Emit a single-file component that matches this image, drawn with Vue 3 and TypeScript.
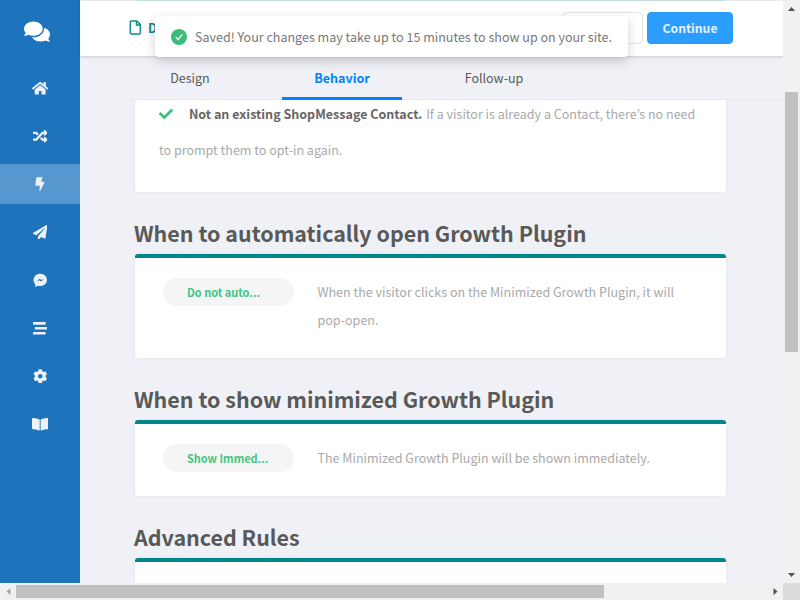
<script setup lang="ts">
interface Icon {
  name: string
  box: string
  path: string
  active?: boolean
}

interface Rule {
  title: string
  choice: string
  text: string
  kind: string
}

const nav: Icon[] = [
  { name: 'home', box: '0 0 576 512', path: 'M280.37 148.26L96 300.11V464a16 16 0 0 0 16 16l112.06-.29a16 16 0 0 0 15.92-16V368a16 16 0 0 1 16-16h64a16 16 0 0 1 16 16v95.64a16 16 0 0 0 16 16.05L464 480a16 16 0 0 0 16-16V300L295.67 148.26a12.19 12.19 0 0 0-15.3 0zM571.6 251.47L488 182.56V44.05a12 12 0 0 0-12-12h-56a12 12 0 0 0-12 12v72.61L318.47 43a48 48 0 0 0-61 0L4.34 251.47a12 12 0 0 0-1.6 16.9l25.5 31A12 12 0 0 0 45.15 301l235.22-193.74a12.19 12.19 0 0 1 15.3 0L530.9 301a12 12 0 0 0 16.9-1.6l25.5-31a12 12 0 0 0-1.7-16.93z' },
  { name: 'random', box: '0 0 512 512', path: 'M504.971 359.029c9.373 9.373 9.373 24.569 0 33.941l-80 79.984c-15.01 15.01-40.971 4.49-40.971-16.971V416h-58.785a12.004 12.004 0 0 1-8.773-3.812l-70.556-75.596 53.333-57.143L352 336h32v-39.981c0-21.438 25.943-31.998 40.971-16.971l80 79.981zM12 176h84l52.781 56.551 53.333-57.143-70.556-75.596A11.999 11.999 0 0 0 122.785 96H12c-6.627 0-12 5.373-12 12v56c0 6.627 5.373 12 12 12zm372 0v39.984c0 21.46 25.961 31.98 40.971 16.971l80-79.984c9.373-9.373 9.373-24.569 0-33.941l-80-79.981C409.943 24.021 384 34.582 384 56.019V96h-58.785a12.004 12.004 0 0 0-8.773 3.812L96 336H12c-6.627 0-12 5.373-12 12v56c0 6.627 5.373 12 12 12h110.785c3.326 0 6.503-1.381 8.773-3.812L352 176h32z' },
  { name: 'bolt', box: '0 0 30 45', active: true, path: 'M6 1h16c1 0 1.500.7 1.200 1.500L19 15h9.500c1 0 1.500 1 1 2L16 43.500c-.8 1.200-2.600.6-2.400-.8L15 27H2.500c-1 0-1.700-.8-1.500-1.800L4 2.500C4.200 1.500 5 1 6 1z' },
  { name: 'plane', box: '0 0 512 512', path: 'M476 3.2L12.5 270.6c-18.1 10.4-15.8 35.6 2.2 43.2L121 358.4l287.3-253.2c5.5-4.9 13.3 2.6 8.6 8.3L176 407v80.5c0 23.6 28.5 32.9 42.5 15.8L282 426l124.6 52.2c14.2 6 30.4-2.9 33-18.2l72-432C515 7.8 493.3-6.8 476 3.2z' },
  { name: 'messenger', box: '0 0 512 512', path: 'M256 24C125 24 20 121 20 244c0 60 22 112 62 150v98l92-46c26 8 54 12 82 12 131 0 236-93 236-214S387 24 256 24zM128 306l102-104 66 44 96-46-104 104-64-44-96 46z' },
  { name: 'stream', box: '0 0 512 512', path: 'M16 128h416c8.84 0 16-7.16 16-16V48c0-8.84-7.16-16-16-16H16C7.16 32 0 39.16 0 48v64c0 8.84 7.16 16 16 16zm480 80H80c-8.84 0-16 7.16-16 16v64c0 8.84 7.16 16 16 16h416c8.84 0 16-7.16 16-16v-64c0-8.84-7.16-16-16-16zm-64 176H16c-8.84 0-16 7.16-16 16v64c0 8.84 7.16 16 16 16h416c8.84 0 16-7.16 16-16v-64c0-8.84-7.16-16-16-16z' },
  { name: 'cog', box: '0 0 512 512', path: 'M487.4 315.7l-42.6-24.6c4.3-23.2 4.3-47 0-70.2l42.6-24.6c4.9-2.8 7.1-8.6 5.5-14-11.1-35.6-30-67.8-54.7-94.6-3.8-4.1-10-5.1-14.8-2.3L380.8 110c-17.9-15.4-38.5-27.3-60.8-35.1V25.8c0-5.6-3.9-10.5-9.4-11.7-36.7-8.2-74.3-7.8-109.2 0-5.5 1.2-9.4 6.1-9.4 11.7V75c-22.2 7.9-42.8 19.8-60.8 35.1L88.7 85.5c-4.9-2.8-11-1.9-14.8 2.3-24.7 26.7-43.6 58.9-54.7 94.6-1.7 5.4.6 11.2 5.5 14L67.3 221c-4.3 23.2-4.3 47 0 70.2l-42.6 24.6c-4.9 2.8-7.1 8.6-5.5 14 11.1 35.6 30 67.8 54.7 94.6 3.8 4.1 10 5.1 14.8 2.3l42.6-24.6c17.9 15.4 38.5 27.3 60.8 35.1v49.2c0 5.6 3.9 10.5 9.4 11.7 36.7 8.2 74.3 7.8 109.2 0 5.5-1.2 9.4-6.1 9.4-11.7v-49.2c22.2-7.9 42.8-19.8 60.8-35.1l42.6 24.6c4.9 2.8 11 1.9 14.8-2.3 24.7-26.7 43.6-58.9 54.7-94.6 1.5-5.5-.7-11.3-5.6-14.1zM256 336c-44.1 0-80-35.9-80-80s35.9-80 80-80 80 35.9 80 80-35.9 80-80 80z' },
  { name: 'book', box: '0 0 576 512', path: 'M542.22 32.05c-54.8 3.11-163.72 14.43-230.96 55.59-4.64 2.84-7.27 7.89-7.27 13.17v363.87c0 11.55 12.63 18.85 23.28 13.49 69.18-34.82 169.23-44.32 218.7-46.92 16.89-.89 30.02-14.43 30.02-30.66V62.75c.01-17.71-15.35-31.74-33.77-30.7zM264.73 87.64C197.5 46.48 88.58 35.17 33.78 32.05 15.36 31.01 0 45.04 0 62.75V400.6c0 16.24 13.13 29.78 30.02 30.66 49.49 2.6 149.59 12.11 218.77 46.95 10.62 5.35 23.21-1.94 23.21-13.46V100.63c0-5.29-2.62-10.14-7.27-12.99z' },
]

const rules: Rule[] = [
  {
    title: 'When to automatically open Growth Plugin',
    choice: 'Do not auto...',
    text: 'When the visitor clicks on the Minimized Growth Plugin, it will pop-open.',
    kind: 'open',
  },
  {
    title: 'When to show minimized Growth Plugin',
    choice: 'Show Immed...',
    text: 'The Minimized Growth Plugin will be shown immediately.',
    kind: 'show',
  },
]
</script>

<template>
  <div class="window">
    <div class="page">
      <aside class="sidebar">
        <div class="logo">
          <svg viewBox="0 0 576 512"><path d="M416 192c0-88.4-93.1-160-208-160S0 103.6 0 192c0 34.3 14.1 65.9 38 92-13.4 30.2-35.5 54.2-35.8 54.5-2.2 2.3-2.8 5.7-1.5 8.7S4.8 352 8 352c36.6 0 66.9-12.3 88.7-25 32.2 15.7 70.3 25 111.3 25 114.9 0 208-71.6 208-160zm122 220c23.9-26 38-57.7 38-92 0-66.9-53.5-124.2-129.3-148.1.9 6.6 1.3 13.3 1.3 20.1 0 105.9-107.7 192-240 192-10.8 0-21.3-.8-31.7-1.9C207.8 439.6 281.8 480 368 480c41 0 79.1-9.2 111.3-25 21.8 12.7 52.1 25 88.7 25 3.2 0 6.1-1.9 7.3-4.8 1.3-2.9.7-6.3-1.5-8.7-.3-.3-22.4-24.2-35.8-54.5z" /></svg>
        </div>
        <nav>
          <a v-for="item in nav" :key="item.name" :class="{ active: item.active }">
            <svg :viewBox="item.box"><path :d="item.path" /></svg>
          </a>
        </nav>
      </aside>

      <main>
        <div class="top-line"><span></span></div>
        <header>
          <div class="name">
            <svg viewBox="0 0 12 15">
              <path d="M2 1h5.6L11 4.4V13a1 1 0 0 1-1 1H2a1 1 0 0 1-1-1V2a1 1 0 0 1 1-1z" />
              <path d="M7.2 1v4H11" />
            </svg>
            <span>D</span>
          </div>
          <div class="actions">
            <button class="plain"></button>
            <button class="primary">Continue</button>
          </div>
        </header>

        <div class="tabs">
          <div class="tab">Design</div>
          <div class="tab selected">Behavior</div>
          <div class="tab">Follow-up</div>
        </div>

        <div class="content">
          <section class="card intro">
            <p>
              <svg viewBox="0 0 512 512"><path d="M173.898 439.404l-166.4-166.4c-9.997-9.997-9.997-26.206 0-36.204l36.203-36.204c9.997-9.998 26.207-9.998 36.204 0L192 312.69 432.095 72.596c9.997-9.997 26.207-9.997 36.204 0l36.203 36.204c9.997 9.997 9.997 26.206 0 36.204l-294.4 294.401c-9.998 9.997-26.207 9.997-36.204-.001z" /></svg><b>Not an existing ShopMessage Contact.</b> If a visitor is already a Contact, there’s no need to prompt them to opt-in again.
            </p>
          </section>

          <template v-for="rule in rules" :key="rule.kind">
            <h2>{{ rule.title }}</h2>
            <section class="card ruled" :class="rule.kind">
              <div class="pill">{{ rule.choice }}</div>
              <p>{{ rule.text }}</p>
            </section>
          </template>

          <h2>Advanced Rules</h2>
          <section class="card ruled last"></section>
        </div>
      </main>
    </div>

    <div class="vbar">
      <svg viewBox="0 0 17 17"><path d="M5 11h7L8.500 7z" /></svg>
      <div class="thumb"></div>
      <svg viewBox="0 0 17 17"><path d="M5 7h7L8.500 11z" /></svg>
    </div>
    <div class="hbar">
      <svg class="off" viewBox="0 0 17 17"><path d="M10.500 5v7L6.500 8.500z" /></svg>
      <div class="thumb"></div>
      <svg viewBox="0 0 17 17"><path d="M7.500 5v7L11.500 8.500z" /></svg>
    </div>
    <div class="corner"></div>

    <div class="toast">
      <svg viewBox="0 0 16 16"><circle cx="8" cy="8" r="8" /><path d="M4.800 8.200L7.200 10.600 11.300 5.300" /></svg>
      <span>Saved! Your changes may take up to 15 minutes to show up on your site.</span>
    </div>
  </div>
</template>

<style>
body {
  margin: 0;
  overflow: hidden;
}
</style>

<style scoped>
.window {
  position: relative;
  display: grid;
  grid-template: 583px 17px / 783px 17px;
  width: 800px;
  height: 600px;
  overflow: hidden;
  font-family: "Noto Sans CJK KR", "Noto Sans", sans-serif;
  font-size: 12.52px;
  color: #595959;
}

.page {
  display: flex;
  overflow: hidden;
  background: #eff1f6;
}

.sidebar {
  width: 80px;
  flex: none;
  background: #1d73bc;
}

.logo {
  box-sizing: border-box;
  display: flex;
  height: 68px;
  padding: 20px 0 0 24px;
}

.logo svg {
  width: 26px;
  height: 23px;
  fill: #fff;
}

nav {
  display: flex;
  flex-direction: column;
  gap: 8px;
}

nav a {
  display: flex;
  align-items: center;
  justify-content: center;
  height: 40px;
}

nav a.active {
  background: #5597ce;
}

nav svg {
  height: 14.5px;
  fill: #eff1f6;
}

main {
  flex: 1;
  min-width: 0;
  display: flex;
  flex-direction: column;
}

.top-line {
  height: 1px;
  flex: none;
  padding: 0 58px 0 55px;
}

.top-line span {
  display: block;
  height: 1px;
  background: #c9e4e7;
}

header {
  flex: none;
  box-sizing: border-box;
  height: 55px;
  display: flex;
  justify-content: space-between;
  padding: 11px 50px 0 49px;
  background: #fff;
  box-shadow: 0 1px 3px rgba(0, 0, 0, 0.16);
}

.name {
  display: flex;
  align-items: center;
  gap: 6.5px;
  height: 31px;
  color: #0a8a90;
  font-weight: 700;
}

.name svg {
  width: 12.5px;
  height: 15px;
  fill: none;
  stroke: #0a8a90;
  stroke-width: 1.4;
}

.actions {
  display: flex;
  gap: 4px;
}

button {
  box-sizing: border-box;
  height: 32px;
  padding: 0;
  border: 1px solid #e2e2e2;
  border-radius: 4px;
  background: #fff;
  font: inherit;
}

.plain {
  width: 81px;
}

.primary {
  width: 86px;
  padding-bottom: 1px;
  border-color: #2a9dff;
  background: #2a9dff;
  color: #e4f2ff;
  font-size: 12.2px;
  font-weight: 700;
}

.tabs {
  flex: none;
  box-sizing: border-box;
  height: 44px;
  margin-left: 50px;
  display: flex;
  gap: 32px;
  border-bottom: 1px solid #e6e7ea;
}

.tab {
  box-sizing: border-box;
  width: 120px;
  height: 44px;
  line-height: 43px;
  text-align: center;
}

.tab.selected {
  border-bottom: 3px solid #0084ff;
  color: #0084ff;
  font-weight: 700;
}

.content {
  padding: 0 57px 0 55px;
}

.card {
  box-sizing: border-box;
  border-radius: 3px;
  background: #fff;
  box-shadow: 0 0 3px rgba(0, 0, 0, 0.08);
}

.intro {
  display: flow-root;
  height: 92px;
  padding: 0 24px;
  border-radius: 0 0 3px 3px;
  clip-path: inset(0 -4px -4px -4px);
}

.card p {
  margin: 0;
  color: #a9a9a9;
}

.card.intro p {
  margin-top: -4px;
  line-height: 36px;
}

.intro b {
  margin-right: 1px;
  color: #666;
}

.intro svg {
  width: 14px;
  height: 14px;
  margin-right: 16px;
  vertical-align: -2px;
  fill: #3cc17c;
}

h2 {
  margin: 25px 0 6px -1px;
  font-size: 21.44px;
  line-height: 31px;
  font-weight: 700;
  color: #595959;
  white-space: nowrap;
}

.ruled {
  display: flex;
  gap: 24px;
  padding: 20px 28px 0;
  border-top: 4px solid #00868b;
}

.open {
  height: 104px;
}

.show {
  height: 76px;
}

.last {
  height: 60px;
}

.pill {
  box-sizing: border-box;
  flex: none;
  width: 130.5px;
  height: 28px;
  padding-left: 24px;
  border-radius: 14px;
  background: #f5f5f5;
  color: #43c683;
  font-size: 10.95px;
  font-weight: 700;
  line-height: 28px;
}

.ruled p {
  line-height: 28px;
}

.vbar,
.hbar {
  display: flex;
  background: #f1f1f1;
}

.vbar {
  flex-direction: column;
  justify-content: space-between;
}

.hbar {
  justify-content: space-between;
}

.vbar svg,
.hbar svg {
  width: 17px;
  height: 17px;
  flex: none;
  fill: #505050;
}

.hbar .off {
  fill: #a3a3a3;
}

.thumb {
  background: #c1c1c1;
}

.vbar .thumb {
  height: 260px;
  margin: 75px 2px auto;
}

.hbar .thumb {
  width: 588px;
  margin: 2px auto 2px -1px;
}

.corner {
  background: #dcdcdc;
}

.toast {
  position: absolute;
  left: 155px;
  top: 16px;
  box-sizing: border-box;
  width: 473px;
  height: 41px;
  display: flex;
  align-items: center;
  gap: 8px;
  padding-left: 16px;
  border-radius: 4px;
  background: #fff;
  box-shadow: 0 4px 12px rgba(0, 0, 0, 0.18);
  color: #777;
  white-space: nowrap;
}

.toast svg {
  width: 16px;
  height: 16px;
  fill: #3cbc7c;
}

.toast path {
  fill: none;
  stroke: #fff;
  stroke-width: 1.3;
}
</style>
